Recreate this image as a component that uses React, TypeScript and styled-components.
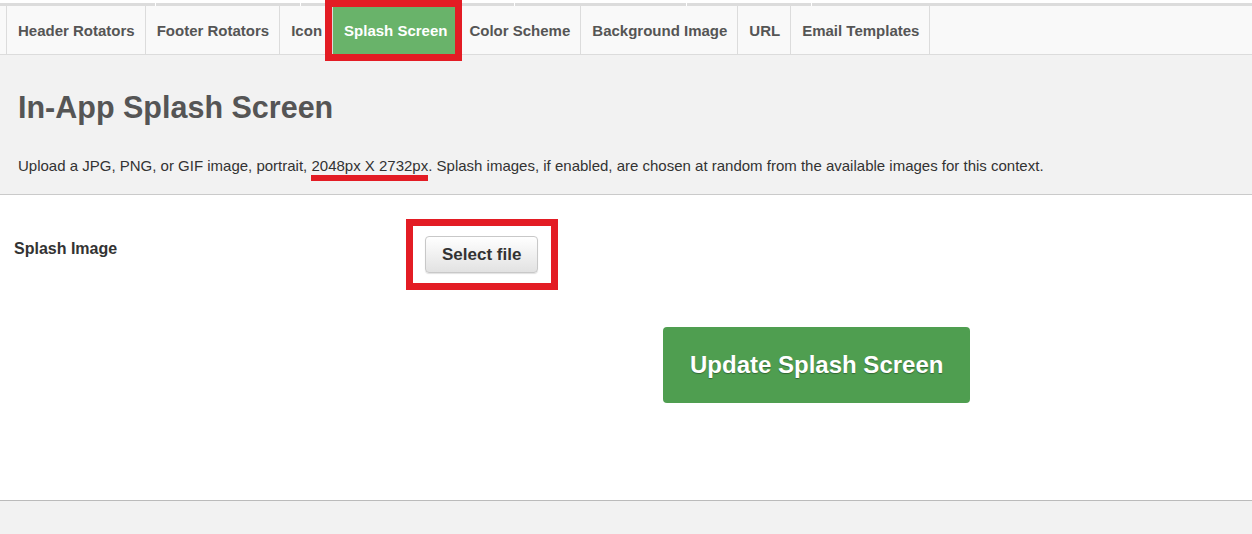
import React from 'react';
import styled, {createGlobalStyle, css} from 'styled-components';

const tabs = [
  'Header Rotators',
  'Footer Rotators',
  'Icon',
  'Splash Screen',
  'Color Scheme',
  'Background Image',
  'URL',
  'Email Templates',
];

const activeTab = 'Splash Screen';

// widths of the cut-off row above the tabs, split by thin white gaps
const stripSegments = [155, 144, 213, 171, 124];

const App = () => {
  return (
    <>
      <GlobalStyle />
      <Page>
        <TopStrip>
          {stripSegments.map((w, i) => (
            <StripSegment key={i} style={{flexBasis: w}} />
          ))}
          <StripSegment grow />
        </TopStrip>

        <TabBar>
          {tabs.map((tab) => (
            <Tab key={tab} active={tab === activeTab}>
              {tab}
              {tab === activeTab && <TabHighlight />}
            </Tab>
          ))}
        </TabBar>

        <Header>
          <Title>In-App Splash Screen</Title>
          <Description>
            Upload a JPG, PNG, or GIF image, portrait,{' '}
            <Marked>2048px X 2732px</Marked>. Splash images, if enabled, are
            chosen at random from the available images for this context.
          </Description>
        </Header>

        <Form>
          <FieldRow>
            <Label>Splash Image</Label>
            <FileField>
              <FileButton type="button">Select file</FileButton>
              <FieldHighlight />
            </FileField>
          </FieldRow>
          <ActionRow>
            <SubmitButton type="button">Update Splash Screen</SubmitButton>
          </ActionRow>
        </Form>

        <Footer />
      </Page>
    </>
  );
};

export default App;

const GlobalStyle = createGlobalStyle`
  html, body {
    margin: 0;
    padding: 0;
    background: #fff;
  }
  body {
    font-family: 'Liberation Sans', Arial, sans-serif;
    color: #333;
  }
`;

const annotation = '#e31c24';

const Page = styled.div`
  width: 1252px;
  height: 534px;
  display: flex;
  flex-direction: column;
  overflow: hidden;
`;

const TopStrip = styled.div`
  display: flex;
  gap: 1px;
  height: 6px;
  padding-top: 3px;
  box-sizing: border-box;
  background: #fff;
`;

const StripSegment = styled.div<{grow?: boolean}>`
  flex: 0 0 auto;
  height: 3px;
  background: #dcdcdc;

  ${(props) =>
    props.grow &&
    css`
      flex: 1 1 auto;
    `}
`;

const TabBar = styled.div`
  display: flex;
  height: 49px;
  padding-left: 6px;
  background: #f9f9f9;
  border-bottom: 1px solid #dcdcdc;
  box-sizing: border-box;
`;

const Tab = styled.div<{active: boolean}>`
  position: relative;
  display: flex;
  align-items: center;
  padding: 0 10px 0 11px;
  font-size: 15px;
  font-weight: 700;
  color: #555;
  border-right: 1px solid #dcdcdc;

  &:first-child {
    border-left: 1px solid #dcdcdc;
  }

  ${(props) =>
    props.active &&
    css`
      background: #69b36a;
      color: #fff;
    `}
`;

const TabHighlight = styled.span`
  position: absolute;
  top: -6px;
  bottom: -7px;
  left: -8px;
  right: -5px;
  border: 7px solid ${annotation};
`;

const Header = styled.div`
  padding: 36px 18px 18px;
  background: #f2f2f2;
  border-bottom: 1px solid #cacaca;
`;

const Title = styled.h1`
  margin: 0 0 32px;
  font-size: 30.5px;
  line-height: 33px;
  font-weight: 700;
  color: #555;
`;

const Description = styled.p`
  margin: 0;
  font-size: 15px;
  line-height: 20px;
  color: #333;
`;

const Marked = styled.span`
  position: relative;

  &::after {
    content: '';
    position: absolute;
    left: 0;
    right: 0;
    top: 100%;
    margin-top: 1px;
    height: 6px;
    background: ${annotation};
  }
`;

const Form = styled.div`
  flex: 1;
  padding: 41px 0 0 14px;
  display: flex;
  flex-direction: column;
  gap: 54px;
  background: #fff;
`;

const FieldRow = styled.div`
  display: grid;
  grid-template-columns: 411px 1fr;
  align-items: start;
`;

const Label = styled.div`
  margin-top: 3px;
  font-size: 16px;
  line-height: 20px;
  font-weight: 700;
  color: #333;
`;

const FileField = styled.div`
  position: relative;
  justify-self: start;
`;

const FileButton = styled.button`
  display: block;
  padding: 7px 16px;
  font-family: inherit;
  font-size: 17px;
  line-height: 21px;
  font-weight: 700;
  color: #333;
  background: linear-gradient(#fff, #e2e2e2);
  border: 1px solid #c8c8c8;
  border-radius: 4px;
  box-shadow: 0 1px 1px rgba(0, 0, 0, 0.12);
`;

const FieldHighlight = styled.span`
  position: absolute;
  top: -17px;
  bottom: -17px;
  left: -19px;
  right: -20px;
  border: 7px solid ${annotation};
`;

const ActionRow = styled.div`
  display: flex;
  padding-left: 649px;
`;

const SubmitButton = styled.button`
  padding: 24px 27px;
  font-family: inherit;
  font-size: 24px;
  line-height: 28px;
  font-weight: 700;
  color: #fff;
  text-shadow: 0 1px 1px rgba(0, 0, 0, 0.35);
  background: #4f9e50;
  border: none;
  border-radius: 4px;
`;

const Footer = styled.div`
  height: 33px;
  background: #f2f2f2;
  border-top: 1px solid #bbb;
`;
